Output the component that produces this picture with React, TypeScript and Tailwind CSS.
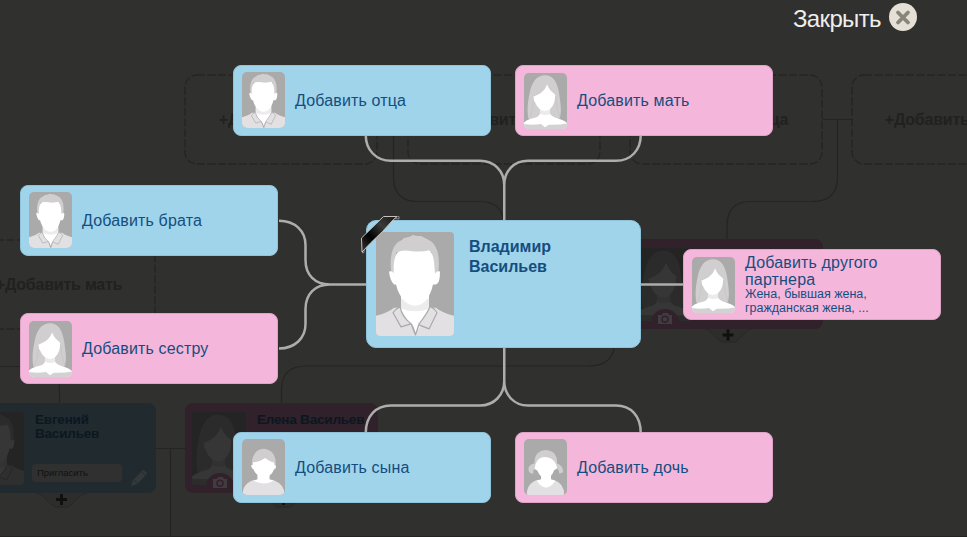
import React from "react";

type Kind = "man" | "woman" | "boy" | "girl";

function Man() {
  return (
    <g>
      <path d="M0 83 Q12 80 18 75 L60 75 Q66 80 78 83 V103 H0Z" fill="#e2e0e2" />
      <path d="M25 62H53V77L40 101L25 77Z" fill="#fff" />
      <path d="M25 66H53V76Q40 81 25 76Z" fill="#ececec" />
      <path d="M16 44C13 28 15 16 22 10L26 8L28 6L33 5L37 3L41 4L45 4L51 7L56 10C63 17 64 28 62 44L56 42V20H20V42Z" fill="#d0cecf" />
      <path d="M18 41C17 33 18 26 21 21Q24 17 36 19Q47 20 53 18Q57 21 58 29L59 41Q61 38 64 39Q64 51 60 52H57C54 65 48 73 39 73C30 73 23 64 20 52H18Q14 48 13 39Q17 38 18 41Z" fill="#fff" />
      <path d="M24 74Q20 76 17 80L25 94L35 91L39.5 102L43 92L53 96L61 80Q58 75 54 74Q51 81 43 91L39.5 102Q37 92 34 90Q26 84 24 74Z" fill="#e2e0e2" stroke="#aaa" strokeWidth="1.2" strokeLinejoin="round" />
    </g>
  );
}

function Woman() {
  return (
    <g>
      <path d="M8 84C5 67 7 53 10 38C14 15 24 4 38 4C53 4 61 17 64 39C66 55 69 69 65 83Q55 90 36 91Q18 90 8 84Z" fill="#d0cecf" />
      <path d="M0 91Q7 85 21 82Q29 79 29 73V64H47V74Q49 80 60 83Q72 86 78 92V103H0Z" fill="#fff" />
      <path d="M0 94Q15 96 31 94L38 100L45 95Q62 96 78 93V103H0Z" fill="#d3d1d2" />
      <path d="M29 65Q38 72 47 65V76Q38 79 29 75Z" fill="#ebebeb" />
      <path d="M18 43Q36 37 42 21Q46 32 55 38L57 42L55 54Q50 69 38 70Q26 69 20 54Q16 49 17 43Z" fill="#fff" />
      <path d="M10 82Q17 68 17 45M65 82Q59 65 57 42" fill="none" stroke="#c1c1c1" strokeWidth="1" />
    </g>
  );
}

function Boy() {
  return (
    <g>
      <path d="M1 103Q1 80 24 75Q39 82 54 75Q77 81 77 103Z" fill="#e2e0e2" />
      <path d="M28 66H50V74Q56 76 58 77Q39 87 21 77L28 74Z" fill="#fff" />
      <path d="M18 47Q17 32 27 22Q40 13 53 23Q62 31 61 48H18Z" fill="#d0cecf" />
      <path d="M20 43Q33 42 42 35L48 39Q51 42 58 43L59 48Q63 48 61 54L58 56Q53 70 39 70Q26 69 21 56Q16 53 17 48L20 48Z" fill="#fff" />
    </g>
  );
}

function Girl() {
  return (
    <g>
      <path d="M5 103Q5 80 26 75Q39 81 53 75Q73 81 73 103Z" fill="#e2e0e2" />
      <path d="M31 67H49V74L57 77Q40 102 23 77L31 74Z" fill="#fff" />
      <path d="M19 45Q18 29 29 23Q39 17 52 24Q61 31 60 45Q71 49 71 61L64 64Q64 56 58 53H21Q16 56 17 64Q9 64 8 56Q8 47 19 45Z" fill="#d0cecf" />
      <path d="M21 46Q26 33 37 33Q52 33 58 46L60 54Q57 57 55 57Q49 72 40 73Q30 72 24 58L19 55Z" fill="#fff" />
    </g>
  );
}

function Portrait({ kind, className }: { kind: Kind; className: string }) {
  return (
    <svg viewBox="0 0 78 103" preserveAspectRatio="none" className={className}>
      <rect width="78" height="103" fill="#aaa" />
      {kind === "man" && <Man />}
      {kind === "woman" && <Woman />}
      {kind === "boy" && <Boy />}
      {kind === "girl" && <Girl />}
    </svg>
  );
}

function AddCard({ kind, label, note, place }: { kind: Kind; label: string; note?: string; place: string }) {
  const male = kind === "man" || kind === "boy";
  return (
    <button
      className={`absolute flex h-[71px] w-[258px] items-center rounded-lg border pl-2 text-left text-[#154e7e] ${
        male ? "border-[#8fc3da] bg-[#9fd4eb]" : "border-[#dca3c6] bg-[#f5b6db]"
      } ${place}`}
    >
      <Portrait kind={kind} className={`h-14 w-[43px] shrink-0 rounded-[5px] ${kind === "woman" ? "mt-px" : "-mt-px"}`} />
      <span className="ml-2.5 flex w-[180px] flex-col">
        <span className={note ? "w-[150px] text-[16px] leading-[17px] tracking-[0.16px]" : "text-[16px] leading-5 tracking-[0.16px]"}>{label}</span>
        {note && <span className="w-[150px] text-[12.5px] leading-[13.5px]">{note}</span>}
      </span>
    </button>
  );
}

function Placeholder({ label, place }: { label: string; place: string }) {
  return (
    <div className={`absolute flex h-[91px] w-[194px] items-center justify-center whitespace-nowrap text-[16px] font-bold tracking-[-0.22px] text-[#21211f] ${place}`}>
      <svg className="absolute inset-0" width="194" height="91" fill="none">
        <rect x="1" y="1" width="192" height="89" rx="12" stroke="#242422" strokeWidth="1.3" strokeDasharray="8 2.5" />
      </svg>
      {label}
    </div>
  );
}

function Camera() {
  return (
    <svg width="32" height="22" viewBox="0 0 32 22" className="absolute bottom-0 left-[19px]">
      <path d="M2 22V16A14 14 0 0 1 30 16V22Z" fill="#30212a" />
      <path d="M9 8h4l1-2h5l1 2h3v9H9Z" fill="#423b3f" />
      <circle cx="16" cy="12.3" r="3" fill="none" stroke="#30212a" strokeWidth="1.5" />
    </svg>
  );
}

function TreeCard({ kind, name, invite, place }: { kind: Kind; name?: string; invite?: boolean; place: string }) {
  return (
    <div className={`absolute flex h-[90px] w-[193px] rounded-lg pl-[7px] pt-[9px] ${kind === "man" ? "bg-[#202a2f]" : "bg-[#30212a]"} ${place}`}>
      <Portrait kind={kind} className="h-[73px] w-[54px] shrink-0 rounded brightness-[.21]" />
      <div className="ml-[11px] flex w-28 flex-col pt-px text-[13.5px] font-bold leading-[14px] tracking-[-0.2px] text-[#0b1721]">
        <span className="w-[112px]">{name}</span>
        {invite && (
          <span className="-ml-[3px] mt-auto mb-[11px] flex h-[18px] w-[90px] items-center rounded-sm bg-[#303030] pl-[5px] text-[9.5px] font-normal tracking-normal text-[#111]">
            Пригласить
          </span>
        )}
      </div>
      {invite ? (
        <svg className="absolute bottom-[7px] right-[9px]" width="16" height="16" viewBox="0 0 16 16">
          <path d="M0 16L2 10L11 1Q13-1 15 2Q17 4 15 5L6 14Z" fill="#33393b" />
          <path d="M3 10L6 13M11 2L14 5" stroke="#202a2f" strokeWidth="1" />
        </svg>
      ) : (
        <Camera />
      )}
    </div>
  );
}

function BackgroundLines() {
  return (
    <svg className="absolute inset-0" width="967" height="537" fill="none" stroke="#242422" strokeWidth="1.2">
      <path d="M378 119.5H408M393.500 119V177Q393.500 201.500 418 201.500H480Q504 201.500 504 226" />
      <path d="M822 119.500H852M837.500 119V177Q837.500 201.500 812 201.500H751Q727 201.500 727 226V239" />
      <path d="M615 340Q615 366 589 366H306Q281.500 366 281.500 390V403" />
      <path d="M0 366.500H35Q59.500 366.500 59.500 390V403" />
      <path d="M156 448.500H185M170.500 448V537" />
      <path d="M0 536.500H967" stroke="#262222" />
      <g fill="#2d2d2b" stroke="#272725" strokeWidth="1">
        <path d="M36 493C44 494 49 504 55 507H68C74 504 79 494 87 493" />
        <path d="M258 493C266 494 271 504 277 507H290C296 504 301 494 309 493" />
        <path d="M703 328C711 329 716 339 722 342H735C741 339 746 329 754 328" />
      </g>
      <path d="M56 499.500H67M61.500 494V505M278 499.500H289M283.500 494V505M722.500 335H733.500M728 329.500V340.500" stroke="#10100f" strokeWidth="3" />
    </svg>
  );
}

function Connectors() {
  return (
    <svg className="absolute inset-0" width="967" height="537" fill="none" stroke="#adadab" strokeWidth="2.5">
      <path d="M365.750 135C365.750 150 376 160.750 391 160.750H480C494 160.750 504.250 171 504.250 185V221M640.750 135C640.750 150 631 160.750 616 160.750H528C514 160.750 504.250 171 504.250 185" />
      <path d="M279 220.750C295 220.750 305.500 231 305.500 245V260C305.500 275 315 284.500 330 284.500H367M279 348.500C295 348.500 305.500 338 305.500 324V309C305.500 294 315 284.500 330 284.500" />
      <path d="M640 284.500H684" />
      <path d="M504.250 347V381C504.250 395 494 405.500 480 405.500H391C376 405.500 365.750 416 365.750 433M504.250 381C504.250 395 514 405.500 528 405.500H616C631 405.500 640.750 416 640.750 433" />
    </svg>
  );
}

export default function App() {
  return (
    <main className="relative h-[537px] w-[967px] overflow-hidden bg-[#30302e] font-['Liberation_Sans',Arial,sans-serif]">
      <div className="absolute inset-0">
        <BackgroundLines />
        <Placeholder label="+Добавить отца" place="left-[184px] top-[74px]" />
        <Placeholder label="+Добавить мать" place="left-[407px] top-[74px]" />
        <Placeholder label="+Добавить отца" place="left-[629px] top-[74px]" />
        <Placeholder label="+Добавить мать" place="left-[851px] top-[74px]" />
        <Placeholder label="+Добавить мать" place="left-[-38px] top-[239px]" />
        <TreeCard kind="woman" place="left-[630px] top-[239px]" />
        <TreeCard kind="man" name="Евгений Васильев" invite place="left-[-37px] top-[403px]" />
        <TreeCard kind="woman" name="Елена Васильев" place="left-[185px] top-[403px]" />
      </div>

      <Connectors />

      <AddCard kind="man" label="Добавить отца" place="left-[233px] top-[65px]" />
      <AddCard kind="woman" label="Добавить мать" place="left-[515px] top-[65px]" />
      <AddCard kind="man" label="Добавить брата" place="left-[20px] top-[185px]" />
      <AddCard kind="woman" label="Добавить сестру" place="left-[20px] top-[313px]" />
      <AddCard kind="woman" label="Добавить другого партнера" note="Жена, бывшая жена, гражданская жена, ..." place="left-[683px] top-[249px]" />
      <AddCard kind="boy" label="Добавить сына" place="left-[233px] top-[432px]" />
      <AddCard kind="girl" label="Добавить дочь" place="left-[515px] top-[432px]" />

      <section className="absolute left-[366px] top-[220px] flex h-32 w-[275px] items-start rounded-[10px] border border-[#8fc3da] bg-[#9fd4eb] pl-[9px] pt-[11px]">
        <Portrait kind="man" className="h-[104px] w-[78px] shrink-0 rounded" />
        <h1 className="ml-[15px] w-28 pt-[5px] text-[16px] font-bold leading-5 text-[#154e7e]">Владимир Васильев</h1>
        <svg className="absolute -left-[6px] -top-[6px]" width="40" height="40" viewBox="0 0 40 40">
          <defs>
            <linearGradient id="ribbon" x1="0" y1="1" x2="1" y2="0">
              <stop offset="0.1" stopColor="#2a2828" />
              <stop offset="0.34" stopColor="#000" />
              <stop offset="0.65" stopColor="#3b3939" />
              <stop offset="1" stopColor="#171717" />
            </linearGradient>
          </defs>
          <path d="M34 2L38 1.500V4L33.500 3.500ZM1.500 33V38L3 37.500V34Z" fill="#222" stroke="#aaa5a2" strokeWidth="0.8" />
          <path d="M0.500 23L22.500 1.500H36L31 6L21.500 16.500L10 27.500L1 37Z" fill="url(#ribbon)" stroke="#c7c1bd" strokeWidth="1" strokeLinejoin="round" />
        </svg>
      </section>

      <button className="absolute left-[793px] top-[2px] flex items-center gap-2 text-[#eeeeec]">
        <span className="text-[24px] leading-[34px] tracking-[-0.65px]">Закрыть</span>
        <svg width="28" height="28" viewBox="0 0 28 28" className="-mt-1">
          <circle cx="14" cy="14" r="14" fill="#e5e0d5" />
          <path d="M9 9.500L19 19.500M19 9.500L9 19.500" stroke="#89857a" strokeWidth="3.800" strokeLinecap="round" />
        </svg>
      </button>
    </main>
  );
}
